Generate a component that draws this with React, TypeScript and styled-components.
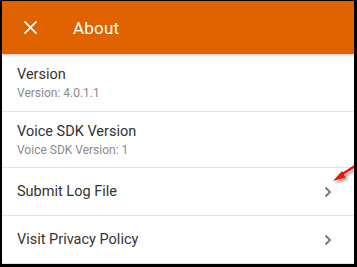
import styled, { createGlobalStyle } from 'styled-components';

const Global = createGlobalStyle`
  html, body {
    margin: 0;
    padding: 0;
    background: #000;
  }
  body {
    font-family: Roboto, "Noto Sans", sans-serif;
  }
`

type Item = {
  title: string
  sub?: string
  link?: boolean
  h: number
}

const items: Item[] = [
  { title: 'Version', sub: 'Version: 4.0.1.1', h: 57 },
  { title: 'Voice SDK Version', sub: 'Voice SDK Version: 1', h: 55 },
  { title: 'Submit Log File', link: true, h: 47 },
  { title: 'Visit Privacy Policy', link: true, h: 47 },
]

const App = () => {
  return (
    <Frame>
      <Global />
      <Screen>
        <Header>
          <CloseIcon viewBox="0 0 14 14">
            <path d="M1 1 L13 13 M13 1 L1 13" stroke="#fff" strokeWidth="1.8" strokeLinecap="square" />
          </CloseIcon>
          <HeaderTitle>About</HeaderTitle>
        </Header>
        <List>
          {items.map((item) => (
            <Row key={item.title} $h={item.h}>
              <RowText>
                <Title>{item.title}</Title>
                {item.sub && <Sub>{item.sub}</Sub>}
              </RowText>
              {item.link && (
                <Chevron viewBox="0 0 8 12">
                  <path d="M1.5 1.5 L6 6 L1.5 10.5" stroke="#757575" strokeWidth="1.8" fill="none" />
                </Chevron>
              )}
            </Row>
          ))}
        </List>
        <Pointer viewBox="0 0 26 22">
          <defs>
            <filter id="sh" x="-50%" y="-50%" width="200%" height="200%">
              <feDropShadow dx="2" dy="2" stdDeviation="1.5" floodColor="#000" floodOpacity="0.45" />
            </filter>
          </defs>
          <g filter="url(#sh)">
            <path d="M23 2 L8 11.5" stroke="#ee1208" strokeWidth="2.4" />
            <path d="M1 17 L10 7 L13.5 13.5 Z" fill="#ee1208" />
          </g>
        </Pointer>
      </Screen>
    </Frame>
  )
}

export default App

const Frame = styled.div`
  width: 357px;
  height: 267px;
  box-sizing: border-box;
  padding: 1px 3px 3px 2px;
  background: #000;
`

const Screen = styled.div`
  position: relative;
  width: 100%;
  height: 100%;
  background: #fff;
  overflow: hidden;
  display: flex;
  flex-direction: column;
`

const Header = styled.div`
  height: 53px;
  flex-shrink: 0;
  background: #e06300;
  display: flex;
  align-items: center;
  box-shadow: 0 1px 3px rgba(0, 0, 0, 0.25);
  position: relative;
  z-index: 1;
`

const CloseIcon = styled.svg`
  width: 13px;
  height: 13px;
  margin-left: 22px;
`

const HeaderTitle = styled.div`
  margin-left: 36px;
  color: #fff;
  font-size: 17px;
  letter-spacing: 0.2px;
`

const List = styled.div`
  display: flex;
  flex-direction: column;
`

const Row = styled.div<{ $h: number }>`
  height: ${(p) => p.$h}px;
  flex-shrink: 0;
  display: flex;
  align-items: center;
  justify-content: space-between;
  padding: 0 22px 0 15px;
  border-bottom: 1px solid #e3e3e3;
`

const RowText = styled.div`
  display: flex;
  flex-direction: column;
  gap: 3px;
`

const Title = styled.div`
  font-size: 14.5px;
  color: #333;
`

const Sub = styled.div`
  font-size: 12px;
  color: #8a8a8a;
`

const Chevron = styled.svg`
  width: 8px;
  height: 12px;
`

const Pointer = styled.svg`
  position: absolute;
  left: 330px;
  top: 163px;
  width: 26px;
  height: 22px;
`
